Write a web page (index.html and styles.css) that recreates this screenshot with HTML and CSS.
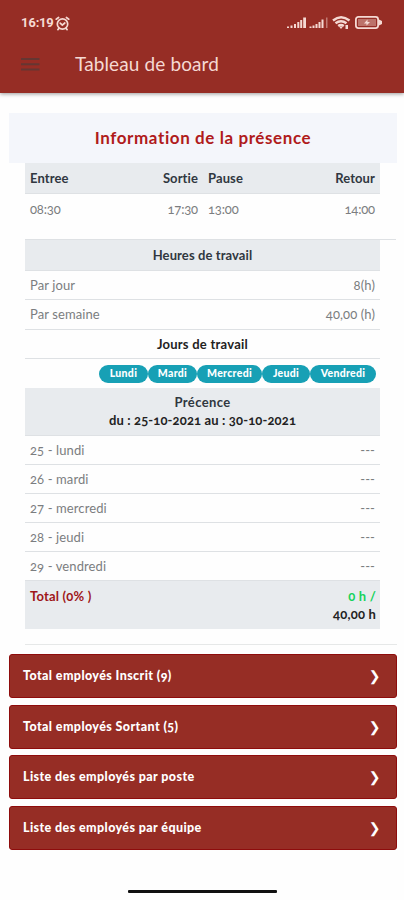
FILE: index.html
```html
<!DOCTYPE html>
<html lang="fr">
<head>
<meta charset="utf-8">
<title>Tableau de board</title>
<link rel="stylesheet" href="styles.css">
</head>
<body>
<header class="appbar">
  <div class="status">
    <span class="clock">16:19</span>
    <svg class="alarm" width="15" height="15" viewBox="0 0 15 15" fill="none" stroke="currentColor" stroke-width="1.7" stroke-linecap="round"><circle cx="7.5" cy="8" r="5.2"/><path d="M1.2 3.2 3.6 1.5M13.8 3.2 11.4 1.5M5.2 7.2 7.3 9.2 9.8 7M3.8 12.6 2.9 13.6M11.2 12.6l.9 1"/></svg>
    <svg class="icons" width="98" height="16" viewBox="0 0 98 16" fill="currentColor">
      <path d="M1 11.500h2V13H1zM4.500 10.500h2V13h-2zM8 9h2v4H8zM11.300 7h2v6h-2zM14.200 5h2v8h-2zM17.200 2.500h2.800V13h-2.800z"/>
      <path d="M23.500 11.500h2V13h-2zM26.500 10.500h2V13h-2zM29.500 9h2v4h-2zM32.500 7h2v6h-2zM35.500 4.500h2V13h-2z"/>
      <path d="M40 2.500h1.500V13H40z" opacity=".45"/>
      <g fill="none" stroke="currentColor" stroke-width="2.400"><path d="M47 5.500Q55 -1 63.500 5.500M49.500 8.300Q55 4 60.500 8.300M52.200 11Q55 8.800 57.800 11"/></g>
      <path d="m53 11.500 2 2.500 2-2.500zM59.500 10H62v4h-2.500z"/>
      <rect x="69.900" y="1.900" width="22.200" height="11.200" rx="2.500" fill="none" stroke="currentColor" stroke-width="1.800"/>
      <path d="M93 4.500 96 6v3l-3 1.500z"/>
      <rect x="72" y="4" width="18" height="7" opacity=".4"/>
      <path d="M78 8.500 81.500 4.500v2.500H84L80.500 10.500V8.500z"/>
    </svg>
  </div>
  <div class="toolbar">
    <svg class="menu" width="19" height="15" viewBox="0 0 19 15" fill="none" stroke="currentColor" stroke-width="2"><path d="M0 2h18.500M0 7.300h18.500M0 12.600h18.500"/></svg>
    <h1>Tableau de board</h1>
  </div>
</header>
<main>
  <section class="card">
    <h2>Information de la présence</h2>
    <div class="body">
      <div class="row head hours"><b>Entree</b><b>Sortie</b><b>Pause</b><b>Retour</b></div>
      <div class="row hours values"><span>08:30</span><span>17:30</span><span>13:00</span><span>14:00</span></div>
      <div class="row head center work"><b>Heures de travail</b></div>
      <div class="row day"><span>Par jour</span><span>8(h)</span></div>
      <div class="row week"><span>Par semaine</span><span>40,00 (h)</span></div>
      <div class="row center dark days"><b>Jours de travail</b></div>
      <div class="pills"><b class="p1">Lundi</b><b class="p2">Mardi</b><b class="p3">Mercredi</b><b class="p4">Jeudi</b><b class="p5">Vendredi</b></div>
      <div class="head period"><b>Précence</b><b class="dates">du : 25-10-2021 au : 30-10-2021</b></div>
      <div class="row"><span>25 - lundi</span><span>---</span></div>
      <div class="row"><span>26 - mardi</span><span>---</span></div>
      <div class="row"><span>27 - mercredi</span><span>---</span></div>
      <div class="row"><span>28 - jeudi</span><span>---</span></div>
      <div class="row"><span>29 - vendredi</span><span>---</span></div>
      <div class="head total"><b class="label">Total (0% )</b><div><b class="done">0 h /</b><b>40,00 h</b></div></div>
    </div>
    <hr>
  </section>
  <nav class="links">
    <a><span>Total employés Inscrit (9)</span><i>❯</i></a>
    <a><span>Total employés Sortant (5)</span><i>❯</i></a>
    <a><span>Liste des employés par poste</span><i>❯</i></a>
    <a><span>Liste des employés par équipe</span><i>❯</i></a>
  </nav>
</main>
<div class="home"></div>
</body>
</html>
```
FILE: styles.css
```css
* { box-sizing: border-box; }
body { margin: 0; height: 900px; display: flex; flex-direction: column; background: #fefefe; font: 13px/18px Lato, "Open Sans", sans-serif; font-feature-settings: "onum"; color: #7b7d80; overflow: hidden; }
.appbar { height: 93px; flex: none; background: #962d25; color: #f5d9d3; box-shadow: 0 1px 4px rgba(0,0,0,.4); }
.status { display: flex; align-items: center; height: 46px; padding: 0 20px 0 21px; }
.clock { font: 700 13px/16px Roboto, sans-serif; font-feature-settings: "lnum"; letter-spacing: -.2px; width: 33px; }
.alarm { margin-left: 1px; }
.icons { margin-left: auto; }
.toolbar { display: flex; align-items: center; height: 36px; padding-left: 21px; }
.menu { color: #653632; }
h1 { margin: 0 0 0 35px; font-size: 19px; font-weight: 400; line-height: 24px; letter-spacing: .12px; }
main { padding: 20px 7px 0 9px; }
h2 { margin: 0; height: 50px; background: #f4f6fb; color: #b01b1b; text-align: center; font-size: 17px; line-height: 49px; letter-spacing: .59px; }
.card { height: 532px; }
.body { margin: 0 8px 0 16px; width: 355px; }
hr { margin: 15px 0 0 16px; border: 0; border-top: 1px solid #e6e8e8; }
.row { display: flex; justify-content: space-between; align-items: center; height: 29px; padding: 0 5px 1px; border-bottom: 1px solid #dee1e4; letter-spacing: .1px; }
.head { background: #e8ebee; color: #303740; }
.row.head { height: 31px; }
.hours { display: grid; grid-template-columns: 87px 81px 1fr 70px; }
.hours > :nth-child(2), .hours > :nth-child(4) { text-align: right; }
.hours > :nth-child(3) { padding-left: 10px; }
.row.values { height: 46px; width: 371px; padding-right: 21px; align-items: start; padding-top: 6px; letter-spacing: -.15px; }
.center { justify-content: center; }
.row.week { height: 30px; }
.dark { color: #222; }
.row.days { letter-spacing: .25px; }
.pills { display: flex; justify-content: flex-end; align-items: center; height: 29px; padding-right: 4px; }
.pills b { height: 18px; border-radius: 9px; background: #17a0b5; color: #fff; text-align: center; font-size: 10.500px; line-height: 17px; font-weight: 900; letter-spacing: .3px; }
.p1 { width: 49px; }
.p2 { width: 49px; }
.p3 { width: 65px; }
.p4 { width: 48px; }
.p5 { width: 66px; }
.period { height: 48px; padding-top: 5px; display: flex; flex-direction: column; align-items: center; line-height: 18px; border-bottom: 1px solid #dee1e4; letter-spacing: .35px; }
.dates { color: #222; letter-spacing: .14px; }
.total { display: flex; justify-content: space-between; height: 48px; padding: 6px 4px 0 5px; line-height: 18px; color: #222; letter-spacing: .2px; }
.total div { display: flex; flex-direction: column; align-items: flex-end; }
.label { color: #9e1519; }
.done { color: #16d35c; }
.links { margin-top: 9px; display: flex; flex-direction: column; gap: 6.500px; }
.links a { display: flex; justify-content: space-between; align-items: center; height: 44px; padding: 0 15px 0 13px; background: #962d25; border: 1px solid #8e0c0c; border-radius: 3px; color: #fff; font-weight: 900; font-size: 12.500px; letter-spacing: .4px; }
.links i { font: 700 14px/18px "DejaVu Sans", sans-serif; }
.home { width: 149px; height: 3px; background: #111; margin: auto auto 7px 128px; border-radius: 1px; }
```
